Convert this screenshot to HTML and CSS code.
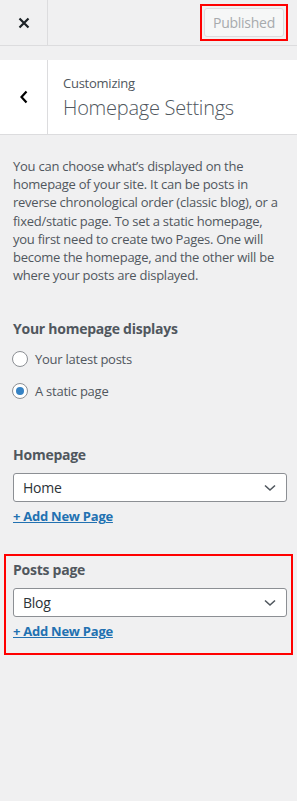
FILE: index.html
```html
<!DOCTYPE html>
<html lang="en">
<head>
    <meta charset="UTF-8">
    <meta name="viewport" content="width=device-width, initial-scale=1.0">
    <title>Customizing Homepage Settings</title>
    <link rel="stylesheet" href="styles.css">
</head>
<body>
    <div class="customizer">
        <div class="top-bar">
            <button class="close-button" aria-label="Close">
                <svg width="12" height="12" viewBox="0 0 12 12">
                    <path d="M1.5 1.5 L10.5 10.5 M10.5 1.5 L1.5 10.5" stroke="#1d2327" stroke-width="2.2" fill="none"/>
                </svg>
            </button>
            <div class="top-bar-actions">
                <div class="highlight">
                    <button class="publish-button" disabled>Published</button>
                </div>
            </div>
        </div>

        <div class="section-header">
            <button class="back-button" aria-label="Back">
                <svg width="10" height="14" viewBox="0 0 10 14">
                    <path d="M7.5 1.5 L2.5 7 L7.5 12.5" stroke="#000" stroke-width="2.2" fill="none"/>
                </svg>
            </button>
            <div class="section-title">
                <span class="section-parent">Customizing</span>
                <h3>Homepage Settings</h3>
            </div>
        </div>

        <p class="description">
            You can choose what’s displayed on the homepage of your site. It can be posts in reverse chronological order (classic blog), or a fixed/static page. To set a static homepage, you first need to create two Pages. One will become the homepage, and the other will be where your posts are displayed.
        </p>

        <div class="control">
            <span class="control-title">Your homepage displays</span>
            <label class="radio-row">
                <span class="radio"></span>
                Your latest posts
            </label>
            <label class="radio-row">
                <span class="radio checked"></span>
                A static page
            </label>
        </div>

        <div class="control page-control">
            <span class="control-title">Homepage</span>
            <div class="select">
                <span>Home</span>
                <svg width="12" height="8" viewBox="0 0 12 8">
                    <path d="M1 1.5 L6 6 L11 1.5" stroke="#50575e" stroke-width="1.6" fill="none"/>
                </svg>
            </div>
            <a href="#" class="add-new">+ Add New Page</a>
        </div>

        <div class="control page-control highlighted">
            <span class="control-title">Posts page</span>
            <div class="select">
                <span>Blog</span>
                <svg width="12" height="8" viewBox="0 0 12 8">
                    <path d="M1 1.5 L6 6 L11 1.5" stroke="#50575e" stroke-width="1.6" fill="none"/>
                </svg>
            </div>
            <a href="#" class="add-new">+ Add New Page</a>
        </div>
    </div>
</body>
</html>
```

FILE: styles.css
```css
body {
    margin: 0;
    background: #f0f0f1;
    font-family: "Open Sans", "Noto Sans", sans-serif;
    letter-spacing: -0.25px;
    color: #50575e;
}
.customizer {
    width: 297px;
    min-height: 801px;
}
.top-bar {
    display: flex;
    height: 45px;
    border-bottom: 1px solid #dcdcde;
}
.close-button {
    width: 48px;
    height: 45px;
    border: none;
    border-right: 1px solid #dcdcde;
    background: transparent;
    display: flex;
    align-items: center;
    justify-content: center;
    padding: 0;
}
.top-bar-actions {
    flex: 1;
    display: flex;
    justify-content: flex-end;
    align-items: center;
    padding-right: 9px;
}
.highlight {
    border: 2px solid #f00;
    padding: 2px;
    display: flex;
}
.publish-button {
    font-family: inherit;
    font-size: 14px;
    letter-spacing: -0.25px;
    color: #a7aaad;
    background: #f6f7f7;
    border: 1px solid #dcdcde;
    border-radius: 3px;
    width: 80px;
    height: 29px;
    padding: 0;
}
.section-header {
    display: flex;
    margin-top: 14px;
    background: #fff;
    height: 74px;
    border-bottom: 1px solid #dcdcde;
}
.back-button {
    width: 48px;
    border: none;
    border-right: 1px solid #dcdcde;
    background: transparent;
    display: flex;
    align-items: center;
    justify-content: center;
    padding: 0;
}
.section-title {
    padding: 14px 0 0 15px;
}
.section-parent {
    display: block;
    font-size: 13px;
    line-height: 18px;
    color: #50575e;
}
.section-title h3 {
    margin: 3px 0 0;
    font-size: 20px;
    font-weight: 300;
    line-height: 26px;
    color: #50575e;
}
.description {
    margin: 0;
    padding: 22px 10px 0 13px;
    font-size: 13px;
    line-height: 18.2px;
}
.control {
    display: flex;
    flex-direction: column;
    align-items: flex-start;
    padding: 0 10px 0 13px;
}
.control-title {
    font-size: 14px;
    font-weight: bold;
    line-height: 20px;
    margin-top: 35px;
}
.radio-row {
    display: flex;
    align-items: center;
    gap: 7px;
    font-size: 13px;
    height: 32px;
}
.radio-row:first-of-type {
    margin-top: 4px;
}
.radio {
    width: 14px;
    height: 14px;
    border: 1px solid #8c8f94;
    border-radius: 50%;
    background: #fff;
    display: flex;
    align-items: center;
    justify-content: center;
    margin-left: -1px;
}
.radio.checked::after {
    content: "";
    width: 8px;
    height: 8px;
    border-radius: 50%;
    background: #3582c4;
}
.page-control {
    padding-right: 10px;
}
.page-control .control-title {
    margin-top: 0;
}
.page-control:not(.highlighted) {
    margin-top: 38px;
}
.select {
    box-sizing: border-box;
    width: 274px;
    height: 29px;
    margin-top: 8px;
    border: 1px solid #8c8f94;
    border-radius: 3px;
    background: #fff;
    display: flex;
    align-items: center;
    justify-content: space-between;
    padding: 0 10px 0 9px;
    font-size: 14px;
    color: #2c3338;
}
.add-new {
    margin-top: 5px;
    font-size: 13px;
    font-weight: bold;
    color: #2271b1;
    line-height: 18px;
}
.highlighted {
    margin: 29px 4px 0;
    border: 2px solid #f00;
    padding: 4px 4px 13px 7px;
}
```
